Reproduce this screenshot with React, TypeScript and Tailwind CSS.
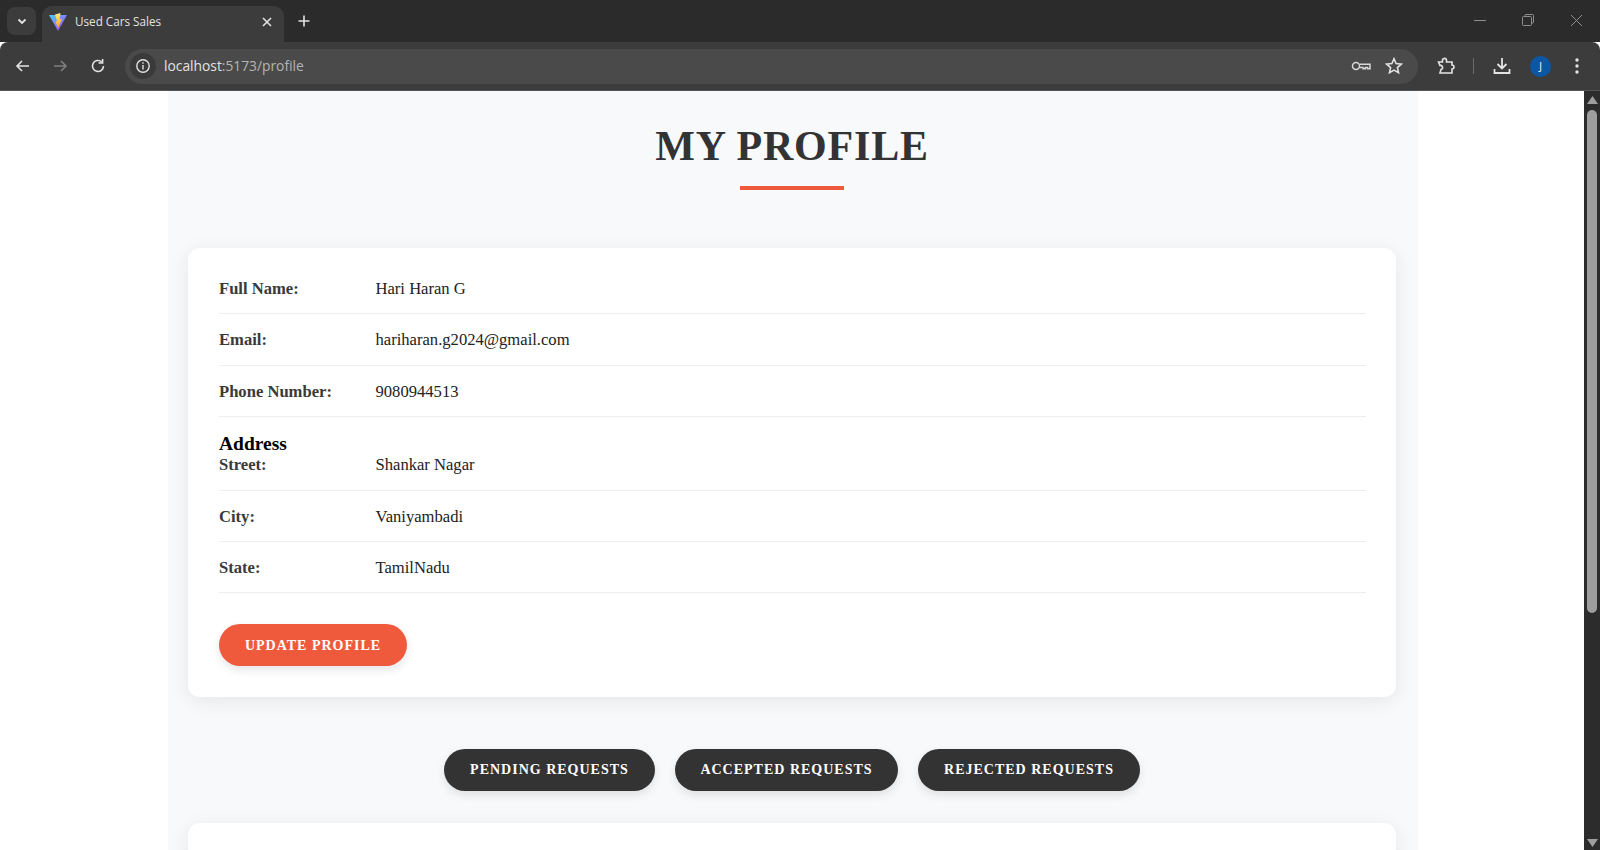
import React from "react";

const rowsTop = [
  ["Full Name:", "Hari Haran G"],
  ["Email:", "hariharan.g2024@gmail.com"],
  ["Phone Number:", "9080944513"],
];
const rowsAddr = [
  ["Street:", "Shankar Nagar"],
  ["City:", "Vaniyambadi"],
  ["State:", "TamilNadu"],
];

function Row({ label, value }: { label: string; value: string }) {
  return (
    <div className="flex border-b border-[#eeeeee] pt-px pb-[14px] mb-[15px] text-[16.6px] leading-[20.4px]">
      <span className="w-[156.5px] font-bold text-[#3a3a3a]">{label}</span>
      <span className="text-[#222222]">{value}</span>
    </div>
  );
}

function Tab() {
  return (
    <div className="relative flex items-center w-[242px] h-[36px] mt-[6px] ml-[6px] bg-[#3c3c3c] rounded-t-[10px] pl-[6px] pr-[8px] pb-[4px]">
      <svg width="20" height="20" viewBox="0 0 20 20" className="shrink-0">
        <defs>
          <linearGradient id="v1" x1="0" y1="0" x2="1" y2="1">
            <stop offset="0" stopColor="#41d1ff" />
            <stop offset="1" stopColor="#bd34fe" />
          </linearGradient>
          <linearGradient id="v2" x1="0" y1="0" x2="0" y2="1">
            <stop offset="0" stopColor="#ffea83" />
            <stop offset="1" stopColor="#ffa800" />
          </linearGradient>
        </defs>
        <path d="M1 3 L19 3 L10 19 Z" fill="url(#v1)" />
        <path d="M12.5 1 L7 2.5 L9 9 L7.5 10 L10 16 L14 7 L11.5 7.5 Z" fill="url(#v2)" />
      </svg>
      <span className="ml-[7px] text-[11.7px] text-[#e3e3e3] font-['Open_Sans',sans-serif] flex-1">Used Cars Sales</span>
      <svg width="12" height="12" viewBox="0 0 12 12" className="mr-[3px]" stroke="#e3e3e3" strokeWidth="1.6" fill="none">
        <path d="M2 2 L10 10 M10 2 L2 10" />
      </svg>
    </div>
  );
}

const pill = "h-[42px] rounded-[25px] text-white text-[14px] font-bold tracking-[1px] shadow-[0_4px_10px_rgba(0,0,0,0.1)]";
const dark = "bg-[#333333] pb-px";

export default function App() {
  return (
    <div className="h-[850px] w-[1600px] overflow-hidden flex flex-col bg-white font-['Liberation_Serif',serif]">
      {/* tab strip */}
      <div className="h-[42px] bg-[#2b2b2b] flex shrink-0">
        <div className="mt-[7px] ml-[7px] w-[29px] h-[28px] rounded-[8px] bg-[#3c3c3c] flex items-center justify-center">
          <svg width="12" height="12" viewBox="0 0 12 12" fill="none" stroke="#e3e3e3" strokeWidth="1.8">
            <path d="M2.5 4.5 L6 8 L9.5 4.5" />
          </svg>
        </div>
        <Tab />
        <div className="ml-[12px] mt-[13px] w-[16px] h-[16px]">
          <svg width="16" height="16" viewBox="0 0 16 16" stroke="#e3e3e3" strokeWidth="1.6" fill="none">
            <path d="M8 2.5 V13.5 M2.5 8 H13.5" />
          </svg>
        </div>
        <div className="ml-auto flex items-center gap-[36px] pr-[17px] pb-[2px]">
          <svg width="12" height="12" viewBox="0 0 12 12" stroke="#8f8f8f" strokeWidth="1" fill="none"><path d="M0 6.5 H12" /></svg>
          <svg width="12" height="12" viewBox="0 0 12 12" stroke="#8f8f8f" strokeWidth="1" fill="none"><rect x="0.5" y="2.5" width="9" height="9" rx="1" /><path d="M3 2.5 V1.5 Q3 0.5 4 0.5 H10.5 Q11.5 0.5 11.5 1.5 V8 Q11.5 9 10.5 9 H9.5" /></svg>
          <svg width="13" height="13" viewBox="0 0 13 13" stroke="#8f8f8f" strokeWidth="1" fill="none"><path d="M1 1 L12 12 M12 1 L1 12" /></svg>
        </div>
      </div>
      {/* toolbar */}
      <div className="h-[49px] bg-[#3c3c3c] border-b border-[#545454] rounded-t-[8px] flex items-center shrink-0 relative">
        <svg width="18" height="18" viewBox="0 0 18 18" className="ml-[14px]" stroke="#e3e3e3" strokeWidth="1.6" fill="none"><path d="M15 9 H3 M8 4 L3 9 L8 14" /></svg>
        <svg width="18" height="18" viewBox="0 0 18 18" className="ml-[19px]" stroke="#7f7f7f" strokeWidth="1.6" fill="none"><path d="M3 9 H15 M10 4 L15 9 L10 14" /></svg>
        <svg width="18" height="18" viewBox="0 0 18 18" className="ml-[20px]" stroke="#e3e3e3" strokeWidth="1.6" fill="none"><path d="M14.5 9 A5.5 5.5 0 1 1 12.6 4.8" /><path d="M13.6 2 V6 H9.6" /></svg>
        <div className="ml-[18px] w-[1293px] h-[35px] rounded-[18px] bg-[#4a4a4a] flex items-center pl-[5px]">
          <div className="w-[26px] h-[26px] rounded-full bg-[#3a3a3a] flex items-center justify-center">
            <svg width="16" height="16" viewBox="0 0 16 16" fill="none" stroke="#e3e3e3" strokeWidth="1.4"><circle cx="8" cy="8" r="6.2" /><path d="M8 7 V11.5" /><path d="M8 4.2 V5.8" /></svg>
          </div>
          <span className="ml-[8px] text-[13.8px] font-['Open_Sans',sans-serif] text-[#e3e3e3]">localhost<span className="text-[#b5b5b5]">:5173/profile</span></span>
          <svg width="20" height="20" viewBox="0 0 20 20" className="ml-auto" fill="none" stroke="#d8d8d8" strokeWidth="1.5"><circle cx="5" cy="10" r="3.5" /><path d="M8.5 8.2 H19 V12.8 H16.5 V11.4 H14.3 V12.8 H12 V11.4 H8.5" /></svg>
          <svg width="18" height="18" viewBox="0 0 18 18" className="ml-[14px] mr-[15px]" fill="none" stroke="#e3e3e3" strokeWidth="1.6"><path d="M9 1.8 L11.1 6.6 L16.3 7.1 L12.4 10.6 L13.5 15.7 L9 13.1 L4.5 15.7 L5.6 10.6 L1.7 7.1 L6.9 6.6 Z" /></svg>
        </div>
        <svg width="20" height="20" viewBox="0 0 20 20" className="ml-[18px]" fill="none" stroke="#e3e3e3" strokeWidth="1.6"><path d="M2.5 6 H6.5 V5 A2 2 0 0 1 10.5 4 V6 H16 V9 A2 2 0 0 1 16 13 V17 H4 L5 13.5 A2 2 0 0 0 4 9.5 Z" /></svg>
        <div className="ml-[17px] w-px h-[16px] bg-[#6a6a6a]" />
        <svg width="20" height="20" viewBox="0 0 20 20" className="ml-[18px]" fill="none" stroke="#e3e3e3" strokeWidth="1.8"><path d="M10 2 V12 M5.5 8 L10 12.5 L14.5 8 M2.5 13 V17 H17.5 V13" /></svg>
        <div className="ml-[18px] w-[21px] h-[21px] rounded-full bg-[#0b57a4] flex items-center justify-center text-[10px] text-white font-['Open_Sans',sans-serif]">J</div>
        <svg width="16" height="18" viewBox="0 0 16 18" className="ml-[18px]" fill="#e3e3e3"><circle cx="8" cy="3" r="1.7" /><circle cx="8" cy="9" r="1.7" /><circle cx="8" cy="15" r="1.7" /></svg>
      </div>
      {/* viewport */}
      <div className="flex flex-1 min-h-0">
        <div className="flex-1 min-w-0 overflow-hidden">
          <div className="w-[1250px] ml-[168px] bg-[#f8f9fa] pl-[20px] pr-[22px] pt-[31px]">
            <h1 className="text-center text-[42px] leading-[48px] font-bold text-[#333333] tracking-[0.8px]">MY PROFILE</h1>
            <div className="w-[104px] h-[4px] bg-[#f05a3c] mx-auto mt-[16px] mb-[58px]" />
            <div className="bg-white rounded-[12px] shadow-[0_4px_20px_rgba(0,0,0,0.08)] pl-[31px] pr-[30px] pt-[30px] pb-[31px]">
              {rowsTop.map(([l, v]) => <Row key={l} label={l} value={v} />)}
              <h3 className="text-[19.5px] leading-[22px] font-bold text-black pt-px -mb-px">Address</h3>
              {rowsAddr.map(([l, v]) => <Row key={l} label={l} value={v} />)}
              <div className="pt-[16px]">
                <button className={`${pill} w-[188px] bg-[#f05a3c]`}>UPDATE PROFILE</button>
              </div>
            </div>
            <div className="flex justify-center gap-[20px] mt-[52px] mb-[32px]">
              <button className={`${pill} ${dark} w-[211px]`}>PENDING REQUESTS</button>
              <button className={`${pill} ${dark} w-[223px]`}>ACCEPTED REQUESTS</button>
              <button className={`${pill} ${dark} w-[222px]`}>REJECTED REQUESTS</button>
            </div>
            <div className="bg-white rounded-[12px] shadow-[0_4px_20px_rgba(0,0,0,0.08)] h-[200px]" />
          </div>
        </div>
        {/* scrollbar */}
        <div className="w-[16px] bg-[#2c2c2c] flex flex-col items-center shrink-0 pt-[5px] pb-[3px]">
          <svg width="11" height="8" viewBox="0 0 11 8" fill="#9e9e9e"><path d="M5.5 0 L11 8 H0 Z" /></svg>
          <div className="w-[10px] h-[503px] mt-[6px] rounded-[5px] bg-[#9e9e9e]" />
          <svg width="11" height="8" viewBox="0 0 11 8" fill="#9e9e9e" className="mt-auto"><path d="M0 0 H11 L5.5 8 Z" /></svg>
        </div>
      </div>
    </div>
  );
}
